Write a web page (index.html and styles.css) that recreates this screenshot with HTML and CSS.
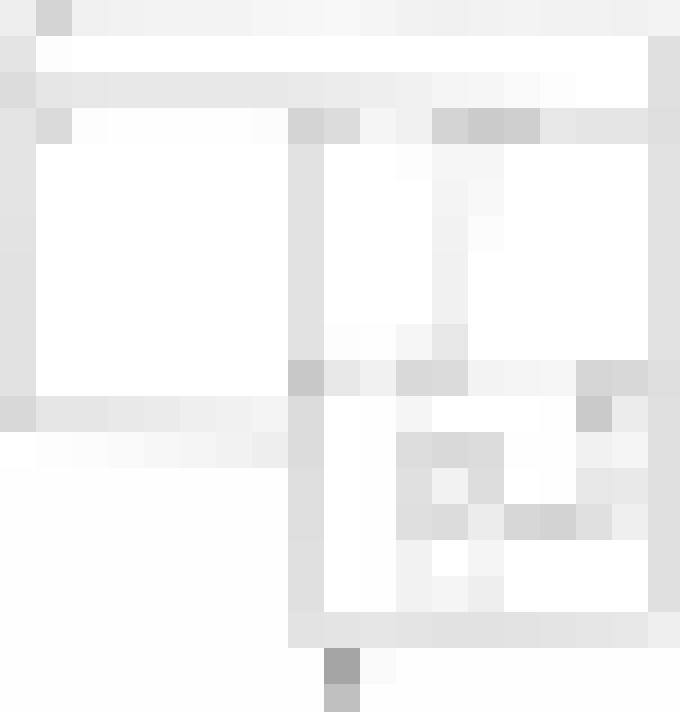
FILE: index.html
```html
<!DOCTYPE html>
<html lang="en">
<head>
<meta charset="utf-8">
<title>Mosaic</title>
<link rel="stylesheet" href="styles.css">
</head>
<body>
<main class="mosaic">
<!-- row 0 -->
<div class="px g-ee"></div><div class="px g-d4"></div><div class="px g-f0"></div><div class="px g-f2"></div><div class="px g-f3"></div><div class="px g-f3"></div><div class="px g-f3"></div><div class="px g-f6"></div><div class="px g-f7"></div><div class="px g-f8"></div><div class="px g-f5"></div><div class="px g-f2"></div><div class="px g-f0"></div><div class="px g-f2"></div><div class="px g-f3"></div><div class="px g-f2"></div><div class="px g-f2"></div><div class="px g-f0"></div><div class="px g-f3"></div>
<!-- row 1 -->
<div class="px g-e4"></div><div class="px g-fd"></div><div class="px"></div><div class="px"></div><div class="px"></div><div class="px"></div><div class="px"></div><div class="px"></div><div class="px"></div><div class="px"></div><div class="px"></div><div class="px"></div><div class="px"></div><div class="px"></div><div class="px"></div><div class="px"></div><div class="px"></div><div class="px"></div><div class="px g-e0"></div>
<!-- row 2 -->
<div class="px g-dc"></div><div class="px g-e6"></div><div class="px g-e7"></div><div class="px g-e8"></div><div class="px g-e8"></div><div class="px g-e8"></div><div class="px g-e8"></div><div class="px g-e8"></div><div class="px g-ea"></div><div class="px g-ec"></div><div class="px g-ee"></div><div class="px g-f0"></div><div class="px g-f5"></div><div class="px g-f6"></div><div class="px g-f9"></div><div class="px g-fd"></div><div class="px"></div><div class="px"></div><div class="px g-e0"></div>
<!-- row 3 -->
<div class="px g-e4"></div><div class="px g-da"></div><div class="px g-fd"></div><div class="px g-fe"></div><div class="px g-fe"></div><div class="px g-fe"></div><div class="px g-fe"></div><div class="px g-fc"></div><div class="px g-d4"></div><div class="px g-dc"></div><div class="px g-f5"></div><div class="px g-f0"></div><div class="px g-d4"></div><div class="px g-cb"></div><div class="px g-cf"></div><div class="px g-e7"></div><div class="px g-e5"></div><div class="px g-e5"></div><div class="px g-de"></div>
<!-- row 4 -->
<div class="px g-e4"></div><div class="px"></div><div class="px"></div><div class="px"></div><div class="px"></div><div class="px"></div><div class="px"></div><div class="px"></div><div class="px g-e2"></div><div class="px"></div><div class="px"></div><div class="px g-fd"></div><div class="px g-f6"></div><div class="px g-f6"></div><div class="px"></div><div class="px"></div><div class="px"></div><div class="px"></div><div class="px g-e2"></div>
<!-- row 5 -->
<div class="px g-e4"></div><div class="px"></div><div class="px"></div><div class="px"></div><div class="px"></div><div class="px"></div><div class="px"></div><div class="px"></div><div class="px g-e2"></div><div class="px"></div><div class="px"></div><div class="px"></div><div class="px g-f4"></div><div class="px g-f8"></div><div class="px"></div><div class="px"></div><div class="px"></div><div class="px"></div><div class="px g-e2"></div>
<!-- row 6 -->
<div class="px g-e3"></div><div class="px"></div><div class="px"></div><div class="px"></div><div class="px"></div><div class="px"></div><div class="px"></div><div class="px"></div><div class="px g-e2"></div><div class="px"></div><div class="px"></div><div class="px"></div><div class="px g-f2"></div><div class="px g-fc"></div><div class="px"></div><div class="px"></div><div class="px"></div><div class="px"></div><div class="px g-e2"></div>
<!-- row 7 -->
<div class="px g-e2"></div><div class="px"></div><div class="px"></div><div class="px"></div><div class="px"></div><div class="px"></div><div class="px"></div><div class="px"></div><div class="px g-e2"></div><div class="px"></div><div class="px"></div><div class="px"></div><div class="px g-f1"></div><div class="px"></div><div class="px"></div><div class="px"></div><div class="px"></div><div class="px"></div><div class="px g-e2"></div>
<!-- row 8 -->
<div class="px g-e2"></div><div class="px"></div><div class="px"></div><div class="px"></div><div class="px"></div><div class="px"></div><div class="px"></div><div class="px"></div><div class="px g-e2"></div><div class="px"></div><div class="px"></div><div class="px"></div><div class="px g-f1"></div><div class="px"></div><div class="px"></div><div class="px"></div><div class="px"></div><div class="px"></div><div class="px g-e2"></div>
<!-- row 9 -->
<div class="px g-e2"></div><div class="px"></div><div class="px"></div><div class="px"></div><div class="px"></div><div class="px"></div><div class="px"></div><div class="px"></div><div class="px g-e2"></div><div class="px g-fd"></div><div class="px g-fe"></div><div class="px g-f6"></div><div class="px g-e7"></div><div class="px"></div><div class="px"></div><div class="px"></div><div class="px"></div><div class="px"></div><div class="px g-e2"></div>
<!-- row 10 -->
<div class="px g-e2"></div><div class="px"></div><div class="px"></div><div class="px"></div><div class="px"></div><div class="px"></div><div class="px"></div><div class="px"></div><div class="px g-c8"></div><div class="px g-e7"></div><div class="px g-f1"></div><div class="px g-d9"></div><div class="px g-db"></div><div class="px g-f3"></div><div class="px g-f5"></div><div class="px g-f6"></div><div class="px g-d5"></div><div class="px g-d8"></div><div class="px g-de"></div>
<!-- row 11 -->
<div class="px g-d8"></div><div class="px g-e6"></div><div class="px g-e6"></div><div class="px g-e9"></div><div class="px g-eb"></div><div class="px g-ef"></div><div class="px g-f1"></div><div class="px g-f4"></div><div class="px g-dc"></div><div class="px"></div><div class="px g-fe"></div><div class="px g-f5"></div><div class="px"></div><div class="px"></div><div class="px"></div><div class="px g-fe"></div><div class="px g-ca"></div><div class="px g-ec"></div><div class="px g-e0"></div>
<!-- row 12 -->
<div class="px"></div><div class="px g-fd"></div><div class="px g-fc"></div><div class="px g-fa"></div><div class="px g-f7"></div><div class="px g-f5"></div><div class="px g-f2"></div><div class="px g-ee"></div><div class="px g-dc"></div><div class="px"></div><div class="px g-fe"></div><div class="px g-dd"></div><div class="px g-d9"></div><div class="px g-dc"></div><div class="px g-fe"></div><div class="px g-fe"></div><div class="px g-f1"></div><div class="px g-f5"></div><div class="px g-e0"></div>
<!-- row 13 -->
<div class="px g-fe"></div><div class="px g-fe"></div><div class="px g-fe"></div><div class="px g-fe"></div><div class="px g-fe"></div><div class="px g-fe"></div><div class="px g-fe"></div><div class="px g-fe"></div><div class="px g-de"></div><div class="px"></div><div class="px g-fe"></div><div class="px g-e0"></div><div class="px g-f2"></div><div class="px g-dd"></div><div class="px"></div><div class="px g-fe"></div><div class="px g-e7"></div><div class="px g-e9"></div><div class="px g-e0"></div>
<!-- row 14 -->
<div class="px g-fe"></div><div class="px g-fe"></div><div class="px g-fe"></div><div class="px g-fe"></div><div class="px g-fe"></div><div class="px g-fe"></div><div class="px g-fe"></div><div class="px g-fe"></div><div class="px g-de"></div><div class="px"></div><div class="px g-fe"></div><div class="px g-df"></div><div class="px g-dc"></div><div class="px g-ec"></div><div class="px g-d7"></div><div class="px g-d3"></div><div class="px g-e0"></div><div class="px g-ef"></div><div class="px g-e0"></div>
<!-- row 15 -->
<div class="px g-fe"></div><div class="px g-fe"></div><div class="px g-fe"></div><div class="px g-fe"></div><div class="px g-fe"></div><div class="px g-fe"></div><div class="px g-fe"></div><div class="px g-fe"></div><div class="px g-e0"></div><div class="px"></div><div class="px g-fe"></div><div class="px g-f2"></div><div class="px"></div><div class="px g-f5"></div><div class="px"></div><div class="px"></div><div class="px"></div><div class="px"></div><div class="px g-e0"></div>
<!-- row 16 -->
<div class="px g-fe"></div><div class="px g-fe"></div><div class="px g-fe"></div><div class="px g-fe"></div><div class="px g-fe"></div><div class="px g-fe"></div><div class="px g-fe"></div><div class="px g-fe"></div><div class="px g-e0"></div><div class="px"></div><div class="px g-fe"></div><div class="px g-f2"></div><div class="px g-f5"></div><div class="px g-ee"></div><div class="px"></div><div class="px"></div><div class="px"></div><div class="px"></div><div class="px g-e0"></div>
<!-- row 17 -->
<div class="px g-fe"></div><div class="px g-fe"></div><div class="px g-fe"></div><div class="px g-fe"></div><div class="px g-fe"></div><div class="px g-fe"></div><div class="px g-fe"></div><div class="px g-fe"></div><div class="px g-e3"></div><div class="px g-e4"></div><div class="px g-e6"></div><div class="px g-e4"></div><div class="px g-e2"></div><div class="px g-e2"></div><div class="px g-e3"></div><div class="px g-e4"></div><div class="px g-e6"></div><div class="px g-e7"></div><div class="px g-ef"></div>
<!-- row 18 -->
<div class="px g-fe"></div><div class="px g-fe"></div><div class="px g-fe"></div><div class="px g-fe"></div><div class="px g-fe"></div><div class="px g-fe"></div><div class="px g-fe"></div><div class="px g-fe"></div><div class="px g-fe"></div><div class="px g-a5"></div><div class="px g-fa"></div><div class="px g-fe"></div><div class="px g-fe"></div><div class="px g-fe"></div><div class="px g-fe"></div><div class="px g-fe"></div><div class="px g-fe"></div><div class="px g-fe"></div><div class="px g-fe"></div>
<!-- row 19 -->
<div class="px g-fe"></div><div class="px g-fe"></div><div class="px g-fe"></div><div class="px g-fe"></div><div class="px g-fe"></div><div class="px g-fe"></div><div class="px g-fe"></div><div class="px g-fe"></div><div class="px g-fe"></div><div class="px g-c0"></div><div class="px g-fe"></div><div class="px g-fe"></div><div class="px g-fe"></div><div class="px g-fe"></div><div class="px g-fe"></div><div class="px g-fe"></div><div class="px g-fe"></div><div class="px g-fe"></div><div class="px g-fe"></div>
</main>
</body>
</html>
```
FILE: styles.css
```css
html, body {
  margin: 0;
  padding: 0;
  background: #fefefe;
  font-family: "Liberation Sans", Arial, sans-serif;
}

.mosaic {
  display: grid;
  grid-template-columns: repeat(18, 36px) 32px;
  grid-template-rows: repeat(19, 36px) 28px;
  width: 680px;
  height: 712px;
  overflow: hidden;
}

.px { background: #ffffff; }

.g-a5 { background: #a5a5a5; }
.g-c0 { background: #c0c0c0; }
.g-c8 { background: #c8c8c8; }
.g-ca { background: #cacaca; }
.g-cb { background: #cbcbcb; }
.g-cf { background: #cfcfcf; }
.g-d3 { background: #d3d3d3; }
.g-d4 { background: #d4d4d4; }
.g-d5 { background: #d5d5d5; }
.g-d7 { background: #d7d7d7; }
.g-d8 { background: #d8d8d8; }
.g-d9 { background: #d9d9d9; }
.g-da { background: #dadada; }
.g-db { background: #dbdbdb; }
.g-dc { background: #dcdcdc; }
.g-dd { background: #dddddd; }
.g-de { background: #dedede; }
.g-df { background: #dfdfdf; }
.g-e0 { background: #e0e0e0; }
.g-e2 { background: #e2e2e2; }
.g-e3 { background: #e3e3e3; }
.g-e4 { background: #e4e4e4; }
.g-e5 { background: #e5e5e5; }
.g-e6 { background: #e6e6e6; }
.g-e7 { background: #e7e7e7; }
.g-e8 { background: #e8e8e8; }
.g-e9 { background: #e9e9e9; }
.g-ea { background: #eaeaea; }
.g-eb { background: #ebebeb; }
.g-ec { background: #ececec; }
.g-ee { background: #eeeeee; }
.g-ef { background: #efefef; }
.g-f0 { background: #f0f0f0; }
.g-f1 { background: #f1f1f1; }
.g-f2 { background: #f2f2f2; }
.g-f3 { background: #f3f3f3; }
.g-f4 { background: #f4f4f4; }
.g-f5 { background: #f5f5f5; }
.g-f6 { background: #f6f6f6; }
.g-f7 { background: #f7f7f7; }
.g-f8 { background: #f8f8f8; }
.g-f9 { background: #f9f9f9; }
.g-fa { background: #fafafa; }
.g-fc { background: #fcfcfc; }
.g-fd { background: #fdfdfd; }
.g-fe { background: #fefefe; }
```
